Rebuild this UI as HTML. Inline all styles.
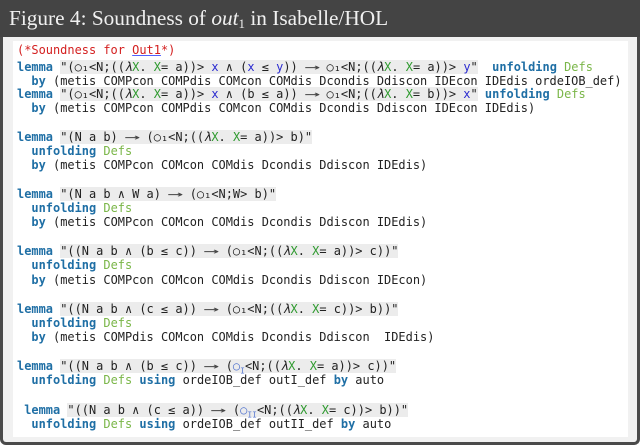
<!DOCTYPE html>
<html><head><meta charset="utf-8"><style>
html,body{margin:0;padding:0;}
body{width:640px;height:445px;position:relative;overflow:hidden;background:#fff;}
.frame{position:absolute;left:0;top:0;width:640px;height:445px;box-sizing:border-box;border:3px solid #4a4a4a;border-top:none;border-radius:0 0 6px 6px;background:#f1f1f1;}
.hdr{position:absolute;left:0;top:0;width:640px;height:37px;background:#444;color:#f0f0f0;font-family:"Liberation Serif",serif;font-size:21.3px;line-height:37px;padding-left:9px;box-sizing:border-box;}
.panel{position:absolute;left:13px;top:41px;width:615px;height:396px;background:#fff;}
.l{position:absolute;left:17px;font-family:"DejaVu Sans Mono","Liberation Mono",monospace;font-size:11.96px;line-height:14px;white-space:pre;color:#222;}
.k{color:#1f6fa5;font-weight:bold;}
.d{color:#7ab648;}
.v{color:#2a2ad0;}
.g{color:#2f9a2f;}
.c{color:#d42020;}
.s{background:#ececec;}
.u{text-decoration:underline;text-decoration-color:#5060ff;}
.a{display:inline-block;width:2ch;text-align:center;transform:scaleX(2.2);color:#444;}
</style></head><body>
<div class="frame"></div>
<div class="hdr">Figure 4: Soundness of <i>out</i><span style="font-size:13px;vertical-align:-3px">1</span> in Isabelle/HOL</div>
<div class="panel"></div>
<div class="l" style="top:43px"><span class="c">(*Soundness for <span class="u">Out1</span>*)</span></div>
<div class="l" style="top:60px"><span class="k">lemma</span> <span class="s">"(○₁&lt;N;((<i>λ</i><span class="g">X</span>. <span class="g">X</span>= a))&gt; <span class="v">x</span> ∧ (<span class="v">x</span> ≤ <span class="v">y</span>)) <span class="a">→</span> ○₁&lt;N;((<i>λ</i><span class="g">X</span>. <span class="g">X</span>= a))&gt; <span class="v">y</span>"</span>  <span class="k">unfolding</span> <span class="d">Defs</span></div>
<div class="l" style="top:74px">  <span class="k">by</span> (metis COMPcon COMPdis COMcon COMdis Dcondis Ddiscon IDEcon IDEdis ordeIOB_def)</div>
<div class="l" style="top:87px"><span class="k">lemma</span> <span class="s">"(○₁&lt;N;((<i>λ</i><span class="g">X</span>. <span class="g">X</span>= a))&gt; <span class="v">x</span> ∧ (b ≤ a)) <span class="a">→</span> ○₁&lt;N;((<i>λ</i><span class="g">X</span>. <span class="g">X</span>= b))&gt; <span class="v">x</span>"</span> <span class="k">unfolding</span> <span class="d">Defs</span></div>
<div class="l" style="top:101px">  <span class="k">by</span> (metis COMPcon COMPdis COMcon COMdis Dcondis Ddiscon IDEcon IDEdis)</div>

<div class="l" style="top:130px"><span class="k">lemma</span> <span class="s">"(N a b) <span class="a">→</span> (○₁&lt;N;((<i>λ</i><span class="g">X</span>. <span class="g">X</span>= a))&gt; b)"</span></div>
<div class="l" style="top:144px">  <span class="k">unfolding</span> <span class="d">Defs</span></div>
<div class="l" style="top:158px">  <span class="k">by</span> (metis COMPcon COMcon COMdis Dcondis Ddiscon IDEdis)</div>

<div class="l" style="top:187px"><span class="k">lemma</span> <span class="s">"(N a b ∧ W a) <span class="a">→</span> (○₁&lt;N;W&gt; b)"</span></div>
<div class="l" style="top:201px">  <span class="k">unfolding</span> <span class="d">Defs</span></div>
<div class="l" style="top:215px">  <span class="k">by</span> (metis COMPcon COMcon COMdis Dcondis Ddiscon IDEdis)</div>

<div class="l" style="top:244px"><span class="k">lemma</span> <span class="s">"((N a b ∧ (b ≤ c)) <span class="a">→</span> (○₁&lt;N;((<i>λ</i><span class="g">X</span>. <span class="g">X</span>= a))&gt; c))"</span></div>
<div class="l" style="top:258px">  <span class="k">unfolding</span> <span class="d">Defs</span></div>
<div class="l" style="top:273px">  <span class="k">by</span> (metis COMPcon COMcon COMdis Dcondis Ddiscon IDEcon)</div>

<div class="l" style="top:302px"><span class="k">lemma</span> <span class="s">"((N a b ∧ (c ≤ a)) <span class="a">→</span> (○₁&lt;N;((<i>λ</i><span class="g">X</span>. <span class="g">X</span>= c))&gt; b))"</span></div>
<div class="l" style="top:316px">  <span class="k">unfolding</span> <span class="d">Defs</span></div>
<div class="l" style="top:330px">  <span class="k">by</span> (metis COMPdis COMcon COMdis Dcondis Ddiscon  IDEdis)</div>

<div class="l" style="top:359px"><span class="k">lemma</span> <span class="s">"((N a b ∧ (b ≤ c)) <span class="a">→</span> (<span style="color:#5a7ad0">○<sub style="font-size:8px;line-height:0">I</sub></span>&lt;N;((<i>λ</i><span class="g">X</span>. <span class="g">X</span>= a))&gt; c))"</span></div>
<div class="l" style="top:373px">  <span class="k">unfolding</span> <span class="d">Defs</span> <span class="k">using</span> ordeIOB_def outI_def <span class="k">by</span> auto</div>

<div class="l" style="top:403px"> <span class="k">lemma</span> <span class="s">"((N a b ∧ (c ≤ a)) <span class="a">→</span> (<span style="color:#5a7ad0">○<sub style="font-size:8px;line-height:0">II</sub></span>&lt;N;((<i>λ</i><span class="g">X</span>. <span class="g">X</span>= c))&gt; b))"</span></div>
<div class="l" style="top:417px">  <span class="k">unfolding</span> <span class="d">Defs</span> <span class="k">using</span> ordeIOB_def outII_def <span class="k">by</span> auto</div>
</body></html>
